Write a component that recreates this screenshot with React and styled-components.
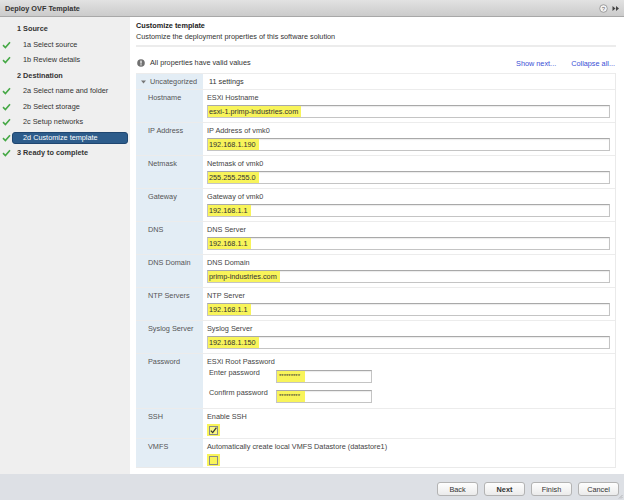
import React from "react";
import styled, { createGlobalStyle } from "styled-components";

const Global = createGlobalStyle`
  html, body { margin: 0; padding: 0; background: #fff; }
  body { font-family: "Liberation Sans", Arial, sans-serif; font-size: 7.3px; color: #333; }
  * { box-sizing: border-box; }
`;

const Window = styled.div`
  width: 624px;
  height: 500px;
  display: flex;
  flex-direction: column;
  overflow: hidden;
  position: relative;
`;

const TitleBar = styled.div`
  height: 17px;
  flex: none;
  display: flex;
  align-items: center;
  justify-content: space-between;
  padding: 0 4px 0 5px;
  background: linear-gradient(#e2e2e2, #cbcbcb);
  border-bottom: 1px solid #a8a8a8;
`;

const Title = styled.div`
  font-weight: bold;
  color: #333;
  font-size: 7.3px;
`;

const TitleIcons = styled.div`
  display: flex;
  align-items: center;
  gap: 4px;
`;

const Body = styled.div`
  flex: 1;
  display: flex;
  min-height: 0;
`;

const Sidebar = styled.div`
  width: 130px;
  flex: none;
  background: #efefef;
  padding-top: 4.5px;
  display: flex;
  flex-direction: column;
`;

const Step = styled.div`
  height: 15.5px;
  display: flex;
  align-items: center;
`;

const CheckSlot = styled.div`
  width: 12px;
  flex: none;
  display: flex;
  align-items: center;
  padding-left: 2px;
`;

const StepLabel = styled.div`
  flex: 1;
  margin-right: 2px;
  height: 12px;
  line-height: 10px;
  border-radius: 3px;
  border: 1px solid ${(p) => (p.$active ? "#1f4670" : "transparent")};
  background: ${(p) => (p.$active ? "#2d5c8b" : "transparent")};
  color: ${(p) => (p.$active ? "#fff" : "#333")};
  font-weight: ${(p) => (p.$main ? "bold" : "normal")};
  padding-left: ${(p) => (p.$main ? "4px" : "10px")};
  white-space: nowrap;
`;

const Main = styled.div`
  flex: 1;
  background: #fff;
  padding: 4px 8px 0 6px;
  display: flex;
  flex-direction: column;
`;

const Header = styled.div`
  border-bottom: 2px solid #ececec;
  padding-bottom: 3px;
`;

const HeaderTitle = styled.div`
  font-weight: bold;
  line-height: 10px;
  color: #222;
`;

const HeaderSub = styled.div`
  line-height: 11px;
  color: #333;
`;

const InfoRow = styled.div`
  margin-top: 11px;
  margin-bottom: 5px;
  height: 10px;
  display: flex;
  align-items: center;
  padding-left: 1px;
`;

const InfoText = styled.div`
  flex: 1;
  margin-left: 5px;
  line-height: 10px;
  color: #333;
`;

const Links = styled.div`
  display: flex;
  gap: 15px;
  padding-right: 1px;
`;

const LinkText = styled.span`
  color: #3a4fd6;
`;

const Table = styled.div`
  border: 1px solid #eaeaea;
  border-left: none;
  border-top: none;
`;

const Row = styled.div`
  display: grid;
  grid-template-columns: 67px 1fr;
  border-top: 1px solid #ececec;
`;

const LabelCell = styled.div`
  background: #e3edf5;
  padding: ${(p) => (p.$head ? "0 0 0 5px" : "2px 0 0 12px")};
  line-height: ${(p) => (p.$head ? "15px" : "11px")};
  color: #555;
  display: flex;
  align-items: ${(p) => (p.$head ? "center" : "flex-start")};
  gap: 4px;
  white-space: nowrap;
`;

const ValueCell = styled.div`
  padding: ${(p) => p.$pad || "2px 5px 4px 4px"};
  display: flex;
  flex-direction: column;
  align-items: stretch;
`;

const HeadValue = styled.div`
  line-height: 15px;
  padding-left: 6px;
  color: #333;
`;

const Desc = styled.div`
  line-height: 11px;
  color: #444;
  white-space: nowrap;
`;

const Field = styled.div`
  margin-top: 2px;
  height: 13px;
  border: 1px solid #c4c4c4;
  border-top-color: #a9a9a9;
  box-shadow: inset 0 1px 1px rgba(0, 0, 0, 0.08);
  background: #fff;
  display: flex;
  width: ${(p) => p.$w || "auto"};
`;

const Mark = styled.span`
  background: #f8f45a;
  height: 11px;
  line-height: 11px;
  padding: ${(p) => p.$pad || "0 3px 0 1px"};
  color: #333;
  white-space: nowrap;
  font-size: ${(p) => p.$size || "7.3px"};
`;

const SubRow = styled.div`
  display: flex;
  align-items: flex-start;
  margin-top: ${(p) => p.$mt};
`;

const SubLabel = styled.div`
  width: 69px;
  padding-left: 2px;
  line-height: 9px;
  color: #444;
`;

const CheckHighlight = styled.div`
  margin-top: 2px;
  width: 13px;
  height: 12px;
  background: #f8f45a;
  display: flex;
  align-items: center;
  justify-content: center;
`;

const CheckBox = styled.div`
  width: 9px;
  height: 9px;
  border: 1px solid #8a8a8a;
  background: ${(p) => (p.$checked ? "rgba(255,255,255,0.25)" : "transparent")};
  display: flex;
  align-items: center;
  justify-content: center;
`;

const Footer = styled.div`
  height: 26px;
  flex: none;
  background: #dde0e5;
  display: flex;
  justify-content: flex-end;
  align-items: flex-start;
  gap: 6px;
  padding: 8px 5px 0 0;
`;

const Button = styled.div`
  width: 41px;
  height: 14px;
  border: 1px solid #b3b3b3;
  border-radius: 3px;
  background: linear-gradient(#fefefe, #ebebeb);
  display: flex;
  align-items: center;
  justify-content: center;
  color: #333;
  font-weight: ${(p) => (p.$primary ? "bold" : "normal")};
`;

const Grip = styled.svg`
  position: absolute;
  right: 1px;
  bottom: 1px;
`;

const Check = () => (
  <svg width="9" height="8" viewBox="0 0 9 8">
    <path d="M1 4.2 L3.4 6.5 L8 1.3" fill="none" stroke="#45a845" strokeWidth="1.6" />
  </svg>
);

const steps = [
  { t: "1 Source", main: true },
  { t: "1a Select source", done: true },
  { t: "1b Review details", done: true },
  { t: "2 Destination", main: true },
  { t: "2a Select name and folder", done: true },
  { t: "2b Select storage", done: true },
  { t: "2c Setup networks", done: true },
  { t: "2d Customize template", done: true, active: true },
  { t: "3 Ready to complete", done: true, main: true },
];

const rows = [
  { label: "Hostname", desc: "ESXi Hostname", value: "esxi-1.primp-industries.com" },
  { label: "IP Address", desc: "IP Address of vmk0", value: "192.168.1.190" },
  { label: "Netmask", desc: "Netmask of vmk0", value: "255.255.255.0" },
  { label: "Gateway", desc: "Gateway of vmk0", value: "192.168.1.1" },
  { label: "DNS", desc: "DNS Server", value: "192.168.1.1" },
  { label: "DNS Domain", desc: "DNS Domain", value: "primp-industries.com" },
  { label: "NTP Servers", desc: "NTP Server", value: "192.168.1.1" },
  { label: "Syslog Server", desc: "Syslog Server", value: "192.168.1.150" },
];

export default function App() {
  return (
    <Window>
      <Global />
      <TitleBar>
        <Title>Deploy OVF Template</Title>
        <TitleIcons>
          <svg width="9" height="9" viewBox="0 0 9 9">
            <circle cx="4.5" cy="4.5" r="3.8" fill="#f4f4f4" stroke="#8d8d8d" strokeWidth="0.8" />
            <text x="4.5" y="6.6" fontSize="6" textAnchor="middle" fill="#666" fontFamily="Liberation Sans, Arial, sans-serif">?</text>
          </svg>
          <svg width="8" height="7" viewBox="0 0 8 7">
            <path d="M0.5 1 L3.5 3.5 L0.5 6 Z M4 1 L7 3.5 L4 6 Z" fill="#444" />
          </svg>
        </TitleIcons>
      </TitleBar>
      <Body>
        <Sidebar>
          {steps.map((s) => (
            <Step key={s.t}>
              <CheckSlot>{s.done && <Check />}</CheckSlot>
              <StepLabel $main={s.main} $active={s.active}>{s.t}</StepLabel>
            </Step>
          ))}
        </Sidebar>
        <Main>
          <Header>
            <HeaderTitle>Customize template</HeaderTitle>
            <HeaderSub>Customize the deployment properties of this software solution</HeaderSub>
          </Header>
          <InfoRow>
            <svg width="8" height="8" viewBox="0 0 8 8">
              <circle cx="4" cy="4" r="3.8" fill="#707070" />
              <rect x="3.4" y="1.6" width="1.2" height="3" fill="#fff" />
              <rect x="3.4" y="5.3" width="1.2" height="1.1" fill="#fff" />
            </svg>
            <InfoText>All properties have valid values</InfoText>
            <Links>
              <LinkText>Show next...</LinkText>
              <LinkText>Collapse all...</LinkText>
            </Links>
          </InfoRow>
          <Table>
            <Row>
              <LabelCell $head>
                <svg width="5" height="4" viewBox="0 0 5 4">
                  <path d="M0 0.5 L5 0.5 L2.5 3.5 Z" fill="#777" />
                </svg>
                Uncategorized
              </LabelCell>
              <ValueCell $pad="0">
                <HeadValue>11 settings</HeadValue>
              </ValueCell>
            </Row>
            {rows.map((r) => (
              <Row key={r.label}>
                <LabelCell>{r.label}</LabelCell>
                <ValueCell>
                  <Desc>{r.desc}</Desc>
                  <Field>
                    <Mark>{r.value}</Mark>
                  </Field>
                </ValueCell>
              </Row>
            ))}
            <Row>
              <LabelCell>Password</LabelCell>
              <ValueCell $pad="2px 5px 5px 4px">
                <Desc>ESXi Root Password</Desc>
                <SubRow $mt="1px">
                  <SubLabel>Enter password</SubLabel>
                  <Field $w="96px">
                    <Mark $size="6px" $pad="0 5px 0 2px">*********</Mark>
                  </Field>
                </SubRow>
                <SubRow $mt="5px">
                  <SubLabel>Confirm password</SubLabel>
                  <Field $w="96px">
                    <Mark $size="6px" $pad="0 5px 0 2px">*********</Mark>
                  </Field>
                </SubRow>
              </ValueCell>
            </Row>
            <Row>
              <LabelCell>SSH</LabelCell>
              <ValueCell $pad="2px 5px 2px 4px">
                <Desc>Enable SSH</Desc>
                <CheckHighlight>
                  <CheckBox $checked>
                    <svg width="7" height="7" viewBox="0 0 7 7">
                      <path d="M0.8 3.6 L2.7 5.6 L6.4 0.6" fill="none" stroke="#333" strokeWidth="1.3" />
                    </svg>
                  </CheckBox>
                </CheckHighlight>
              </ValueCell>
            </Row>
            <Row>
              <LabelCell>VMFS</LabelCell>
              <ValueCell $pad="2px 5px 1px 4px">
                <Desc>Automatically create local VMFS Datastore (datastore1)</Desc>
                <CheckHighlight>
                  <CheckBox />
                </CheckHighlight>
              </ValueCell>
            </Row>
          </Table>
        </Main>
      </Body>
      <Footer>
        <Button>Back</Button>
        <Button $primary>Next</Button>
        <Button>Finish</Button>
        <Button>Cancel</Button>
      </Footer>
      <Grip width="5" height="5" viewBox="0 0 5 5">
        <path d="M4.5 1 L1 4.5 M4.5 3 L3 4.5" stroke="#999" strokeWidth="0.6" />
      </Grip>
    </Window>
  );
}
